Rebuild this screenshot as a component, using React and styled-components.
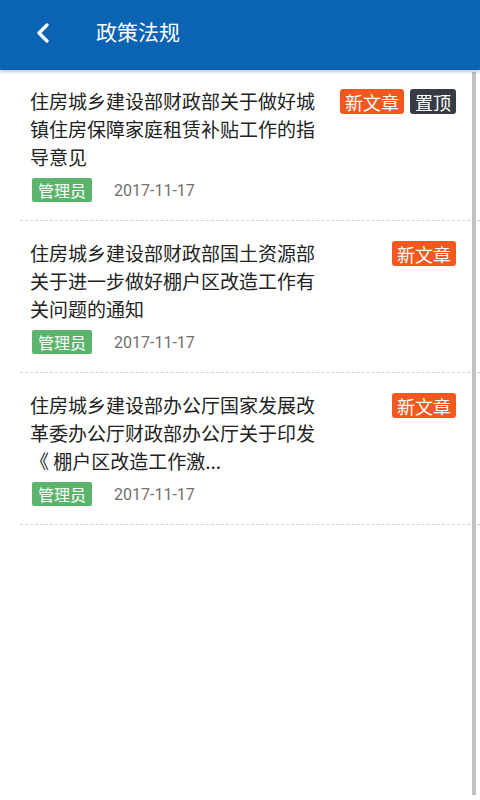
import React from "react";
import styled, { createGlobalStyle } from "styled-components";

const Global = createGlobalStyle`
  html, body { margin: 0; padding: 0; background: #ffffff; }
  body { font-family: "Noto Sans CJK SC", "Noto Sans", sans-serif; }
  #root { min-height: 800px; }
`;

const Page = styled.div`
  position: relative;
  width: 480px;
  height: 800px;
  background: #ffffff;
  overflow: hidden;
`;

const Header = styled.header`
  height: 70px;
  background: #0b63b4;
  display: flex;
  align-items: center;
  box-shadow: 0 2px 3px rgba(0, 0, 0, 0.22);
  position: relative;
  z-index: 2;
`;

const Back = styled.button`
  width: 96px;
  height: 70px;
  border: none;
  background: transparent;
  padding: 0 0 0 36px;
  display: flex;
  align-items: center;
  box-sizing: border-box;
`;

const Title = styled.h1`
  margin: 0;
  color: #ffffff;
  font-size: 21px;
  font-weight: 400;
  line-height: 1;
  margin-top: -7px;
`;

const List = styled.ul`
  list-style: none;
  margin: 0;
  padding: 0;
`;

const Item = styled.li`
  margin-left: 20px;
  padding: ${(p) => (p.$first ? "17px" : "18px")} 24px 18px 10px;
  border-bottom: 1px dashed #d2d2d2;
  display: flex;
  align-items: flex-start;
`;

const Body = styled.div`
  width: 290px;
  flex: none;
`;

const ItemTitle = styled.div`
  font-size: 19px;
  line-height: 28px;
  color: #222222;
  height: 84px;
  overflow: hidden;
`;

const Meta = styled.div`
  display: flex;
  align-items: center;
  margin-top: 7px;
  height: 24px;
`;

const Author = styled.span`
  display: inline-flex;
  align-items: center;
  justify-content: center;
  height: 24px;
  padding: 0 6px;
  margin-left: 2px;
  background: #5cb46c;
  color: #ffffff;
  font-size: 16px;
  border-radius: 2px;
`;

const DateText = styled.span`
  margin-left: 22px;
  font-family: Roboto, "Noto Sans", sans-serif;
  font-size: 16px;
  color: #6f6f6f;
`;

const Tags = styled.div`
  flex: 1;
  display: flex;
  justify-content: flex-end;
  gap: 6px;
  margin-top: 2px;
`;

const Tag = styled.span`
  display: inline-flex;
  align-items: center;
  justify-content: center;
  height: 25px;
  padding: 0 5px;
  border-radius: 3px;
  color: #ffffff;
  font-size: 18px;
  background: ${(p) => (p.$dark ? "#363b45" : "#f5581f")};
`;

const Scrollbar = styled.div`
  position: absolute;
  top: 72px;
  right: 4px;
  width: 4px;
  height: 723px;
  background: #c2c2c2;
`;

const items = [
  {
    title: "住房城乡建设部财政部关于做好城镇住房保障家庭租赁补贴工作的指导意见",
    top: true,
  },
  {
    title: "住房城乡建设部财政部国土资源部关于进一步做好棚户区改造工作有关问题的通知",
  },
  {
    title: "住房城乡建设部办公厅国家发展改革委办公厅财政部办公厅关于印发《 棚户区改造工作激...",
  },
];

export default function App() {
  return (
    <Page>
      <Global />
      <Header>
        <Back aria-label="返回">
          <svg width="14" height="20" viewBox="0 0 14 20" style={{ marginTop: -5 }}>
            <polyline
              points="11,2 3,10 11,18"
              fill="none"
              stroke="#ffffff"
              strokeWidth="3.2"
              strokeLinecap="round"
              strokeLinejoin="round"
            />
          </svg>
        </Back>
        <Title>政策法规</Title>
      </Header>
      <List>
        {items.map((it, i) => (
          <Item key={i} $first={i === 0}>
            <Body>
              <ItemTitle>{it.title}</ItemTitle>
              <Meta>
                <Author>管理员</Author>
                <DateText>2017-11-17</DateText>
              </Meta>
            </Body>
            <Tags>
              <Tag>新文章</Tag>
              {it.top && <Tag $dark>置顶</Tag>}
            </Tags>
          </Item>
        ))}
      </List>
      <Scrollbar />
    </Page>
  );
}
